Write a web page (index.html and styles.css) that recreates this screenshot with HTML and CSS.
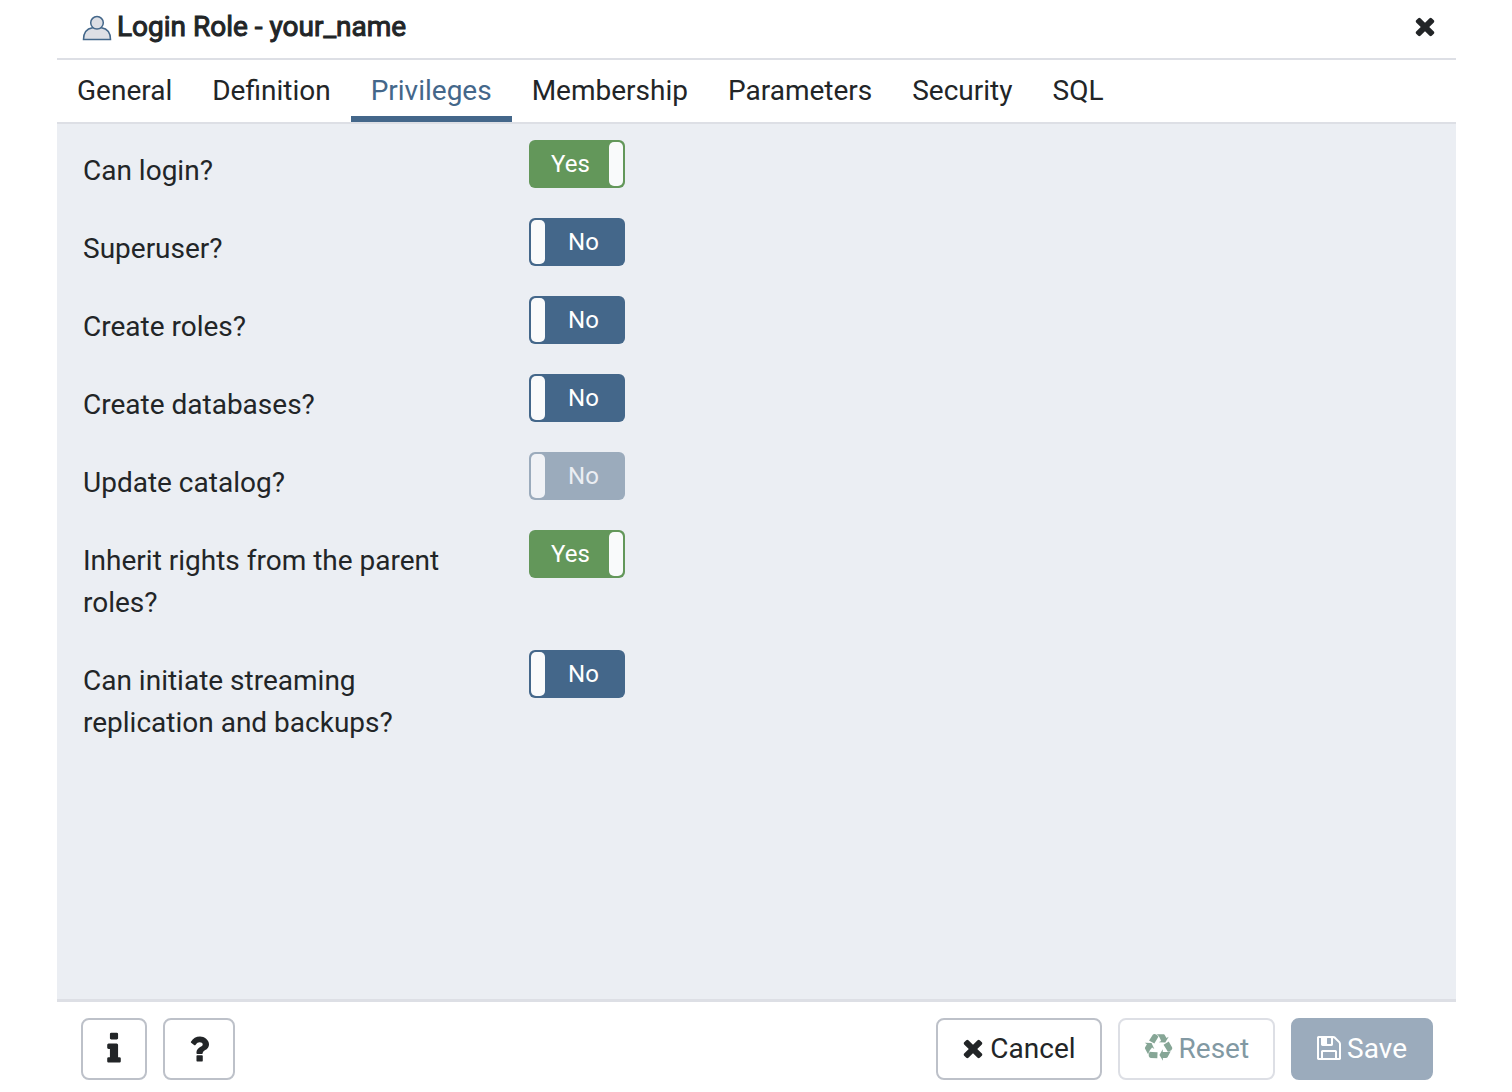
FILE: index.html
```html
<!DOCTYPE html>
<html lang="en">
<head>
<meta charset="utf-8">
<meta name="viewport" content="width=device-width, initial-scale=1">
<title>Login Role - your_name</title>
<link rel="stylesheet" href="styles.css">
</head>
<body>
<svg class="sprite" aria-hidden="true">
  <symbol id="times" viewBox="192 0 1408 1792"><path d="M1490 1322q0 40-28 68l-136 136q-28 28-68 28t-68-28l-294-294-294 294q-28 28-68 28t-68-28l-136-136q-28-28-28-68t28-68l294-294-294-294q-28-28-28-68t28-68l136-136q28-28 68-28t68 28l294 294 294-294q28-28 68-28t68 28l136 136q28 28 28 68t-28 68l-294 294 294 294q28 28 28 68z"/></symbol>
</svg>
<main class="dialog">
  <header class="dialog-header">
    <svg class="icon-role" viewBox="0 0 30 26" aria-hidden="true"><path d="M1.500 24.500C1.500 17 5.500 13.500 10.500 12.700h9C24.500 13.500 28.500 17 28.500 24.500z"/><circle cx="15" cy="7.800" r="6.300"/></svg>
    <h1 class="title">Login Role - your_name</h1>
    <button class="close" type="button" aria-label="Close"><svg class="icon icon-times"><use href="#times"/></svg></button>
  </header>
  <nav class="tabs">
    <a class="tab" href="#general">General</a>
    <a class="tab" href="#definition">Definition</a>
    <a class="tab active" href="#privileges" aria-current="page">Privileges</a>
    <a class="tab" href="#membership">Membership</a>
    <a class="tab" href="#parameters">Parameters</a>
    <a class="tab" href="#security">Security</a>
    <a class="tab" href="#sql">SQL</a>
  </nav>
  <form class="panel" id="privileges">
    <div class="row"><label class="name" for="login">Can login?</label><div class="switch"><input class="toggle" type="checkbox" id="login" checked><span class="state yes">Yes</span></div></div>
    <div class="row"><label class="name" for="super">Superuser?</label><div class="switch"><input class="toggle" type="checkbox" id="super"><span class="state no">No</span></div></div>
    <div class="row"><label class="name" for="roles">Create roles?</label><div class="switch"><input class="toggle" type="checkbox" id="roles"><span class="state no">No</span></div></div>
    <div class="row"><label class="name" for="databases">Create databases?</label><div class="switch"><input class="toggle" type="checkbox" id="databases"><span class="state no">No</span></div></div>
    <div class="row"><label class="name" for="catalog">Update catalog?</label><div class="switch"><input class="toggle" type="checkbox" id="catalog" disabled><span class="state no">No</span></div></div>
    <div class="row"><label class="name" for="inherit">Inherit rights from the parent roles?</label><div class="switch"><input class="toggle" type="checkbox" id="inherit" checked><span class="state yes">Yes</span></div></div>
    <div class="row"><label class="name" for="replication">Can initiate streaming replication and backups?</label><div class="switch"><input class="toggle" type="checkbox" id="replication"><span class="state no">No</span></div></div>
  </form>
  <footer class="dialog-footer">
    <button class="btn" type="button" aria-label="Information"><svg class="icon icon-info" viewBox="576 0 640 1792"><path d="M1216 1344v128q0 26-19 45t-45 19h-512q-26 0-45-19t-19-45v-128q0-26 19-45t45-19h64v-384h-64q-26 0-45-19t-19-45v-128q0-26 19-45t45-19h384q26 0 45 19t19 45v576h64q26 0 45 19t19 45zm-128-1152v192q0 26-19 45t-45 19h-256q-26 0-45-19t-19-45v-192q0-26 19-45t45-19h256q26 0 45 19t19 45z"/></svg></button>
    <button class="btn" type="button" aria-label="Help"><svg class="icon icon-help" viewBox="388 0 1016 1792"><path d="M1088 1256v240q0 16-12 28t-28 12h-240q-16 0-28-12t-12-28v-240q0-16 12-28t28-12h240q16 0 28 12t12 28zm316-600q0 54-15.500 101t-35 76.500-55 59.500-57.500 43.500-61 35.500q-41 23-68.500 65t-27.500 67q0 17-12 32.500t-28 15.500h-240q-15 0-25.500-18.500t-10.500-37.500v-45q0-83 65-156.500t143-108.500q59-27 84-56t25-76q0-42-46.500-74t-107.500-32q-65 0-108 29-35 25-107 115-13 16-31 16-12 0-25-8l-164-125q-13-10-15.500-25t5.500-28q160-266 464-266 80 0 161 31t146 83 106 127.500 41 158.500z"/></svg></button>
    <span class="spacer"></span>
    <button class="btn text-btn" type="button"><svg class="icon icon-times" aria-hidden="true"><use href="#times"/></svg>Cancel</button>
    <button class="btn text-btn reset" type="button" disabled><svg class="icon icon-recycle" viewBox="0 0 1792 1792" aria-hidden="true"><path d="M836 1169l-15 368-2 22-420-29q-36-3-67-31.500t-47-65.500q-11-27-14.500-55t4-65 12-55 21.500-64 19-53q78 12 509 28zm-387-586l180 379-147-92q-63 72-111.500 144.500t-72.500 125-39.500 94.500-18.500 63l-4 21-190-357q-17-26-18-56t6-47l8-18q35-63 114-188l-140-86zm1231 517l-188 359q-12 29-36.500 46.500t-43.500 20.500l-18 4q-71 7-219 12l8 164-230-367 211-362 7 173q170 16 283 5t170-33zm-785-924q-47 63-265 435l-317-187-19-12 225-356q20-31 60-45t80-10q24 2 48.500 12t42 21 41.500 33 36 34.500 36 39.500 32 35zm655 307l212 363q18 37 12.500 76t-27.500 74q-13 20-33 37t-38 28-48.500 22-47 16-51.500 14-46 12q-34-72-265-436l313-195zm-143-226l142-83-220 373-419-20 151-86q-34-89-75-166t-75.500-123.500-64.500-80-47-46.500l-17-13 405 1q31-3 58 10.500t39 28.500l11 15q39 61 112 190z"/></svg>Reset</button>
    <button class="btn text-btn save" type="submit" disabled><svg class="icon icon-save" viewBox="128 0 1536 1792" aria-hidden="true"><path d="M512 1536h768v-384h-768v384zm896 0h128v-896q0-14-10-38.500t-20-34.500l-281-281q-10-10-34-20t-39-10v416q0 40-28 68t-68 28h-576q-40 0-68-28t-28-68v-416h-128v1280h128v-416q0-40 28-68t68-28h832q40 0 68 28t28 68v416zm-384-928v-320q0-13-9.500-22.500t-22.500-9.500h-192q-13 0-22.500 9.500t-9.500 22.500v320q0 13 9.500 22.500t22.500 9.500h192q13 0 22.500-9.500t9.500-22.500zm640 32v928q0 40-28 68t-68 28h-1344q-40 0-68-28t-28-68v-1344q0-40 28-68t68-28h928q40 0 88 20t76 48l280 280q28 28 48 76t20 88z"/></svg>Save</button>
  </footer>
</main>
</body>
</html>
```
FILE: styles.css
```css
* { box-sizing: border-box; }

body {
  margin: 0;
  background: #fff;
  color: #222527;
  font: 28px/42px Roboto, "Liberation Sans", sans-serif;
}

.sprite { display: none; }

.dialog {
  display: flex;
  flex-direction: column;
  min-height: 100vh;
  margin: 0 56px 0 57px;
}

.dialog-header {
  display: flex;
  align-items: center;
  height: 60px;
  padding: 0 20px 4px 25px;
  border-bottom: 2px solid #dddfe5;
}

.icon-role {
  width: 30px;
  height: 26px;
  margin: 2px 5px 0 0;
  fill: #dddfe5;
  stroke: #44678a;
  stroke-width: 1.5;
}

.title {
  flex: 1;
  margin: 0;
  font-size: 28px;
  font-weight: 400;
  -webkit-text-stroke: 1px currentColor;
}

.close {
  display: flex;
  padding: 0 0 2px;
  border: 0;
  background: none;
  color: inherit;
}

.icon { flex: none; fill: currentColor; }
.icon-times { width: 22px; height: 28px; }
.icon-info { width: 14px; height: 38px; }
.icon-help { width: 20px; height: 38px; }
.icon-recycle { width: 29px; height: 28px; }
.icon-save { width: 24px; height: 28px; }

.tabs {
  display: flex;
  height: 64px;
  border-bottom: 2px solid #dddfe5;
}

.tab {
  padding: 10px 20px 4px;
  border-bottom: 6px solid transparent;
  color: inherit;
  text-decoration: none;
}

.tab.active {
  border-color: #44678a;
  color: #44678a;
}

.panel {
  flex: 1;
  padding: 16px 35px 0 26px;
  background: #ebeef3;
}

.row {
  display: grid;
  grid-template-columns: 1fr 2fr;
  align-items: start;
  padding-bottom: 26px;
}

.name { padding: 10px 60px 0 0; }

.switch {
  display: grid;
  width: 96px;
  height: 48px;
}

.toggle {
  display: flex;
  grid-area: 1 / 1;
  appearance: none;
  width: 96px;
  height: 48px;
  margin: 0;
  padding: 2px;
  border-radius: 6px;
  background: #44678a;
}

.toggle::before {
  content: "";
  width: 14px;
  border-radius: 5px;
  background: #f9fafb;
}

.toggle:checked {
  justify-content: flex-end;
  background: #63975a;
}

.toggle:disabled { background: #9babbc; }
.toggle:disabled::before { background: #f0f2f6; }
.toggle:disabled + .state { color: #ebeef3; }

.state {
  grid-area: 1 / 1;
  color: #fff;
  font-size: 24px;
  line-height: 48px;
  text-align: center;
  pointer-events: none;
}

.yes { padding-right: 13px; }
.no { padding-left: 13px; }

.dialog-footer {
  display: flex;
  gap: 16px;
  padding: 16px 23px 12px 24px;
  border-top: 3px solid #dddfe5;
}

.spacer { flex: 1; }

.btn {
  display: flex;
  align-items: center;
  gap: 6px;
  height: 62px;
  padding: 0 24px;
  border: 2px solid #bdc1c9;
  border-radius: 8px;
  background: #fff;
  color: inherit;
  font: inherit;
}

.text-btn .icon { margin-bottom: 2px; }

.reset {
  border-color: #dddfe5;
  color: #8299a3;
}

.reset .icon { color: #86a696; }

.save {
  border-color: #9babbc;
  background: #9babbc;
  color: #fff;
}
```
